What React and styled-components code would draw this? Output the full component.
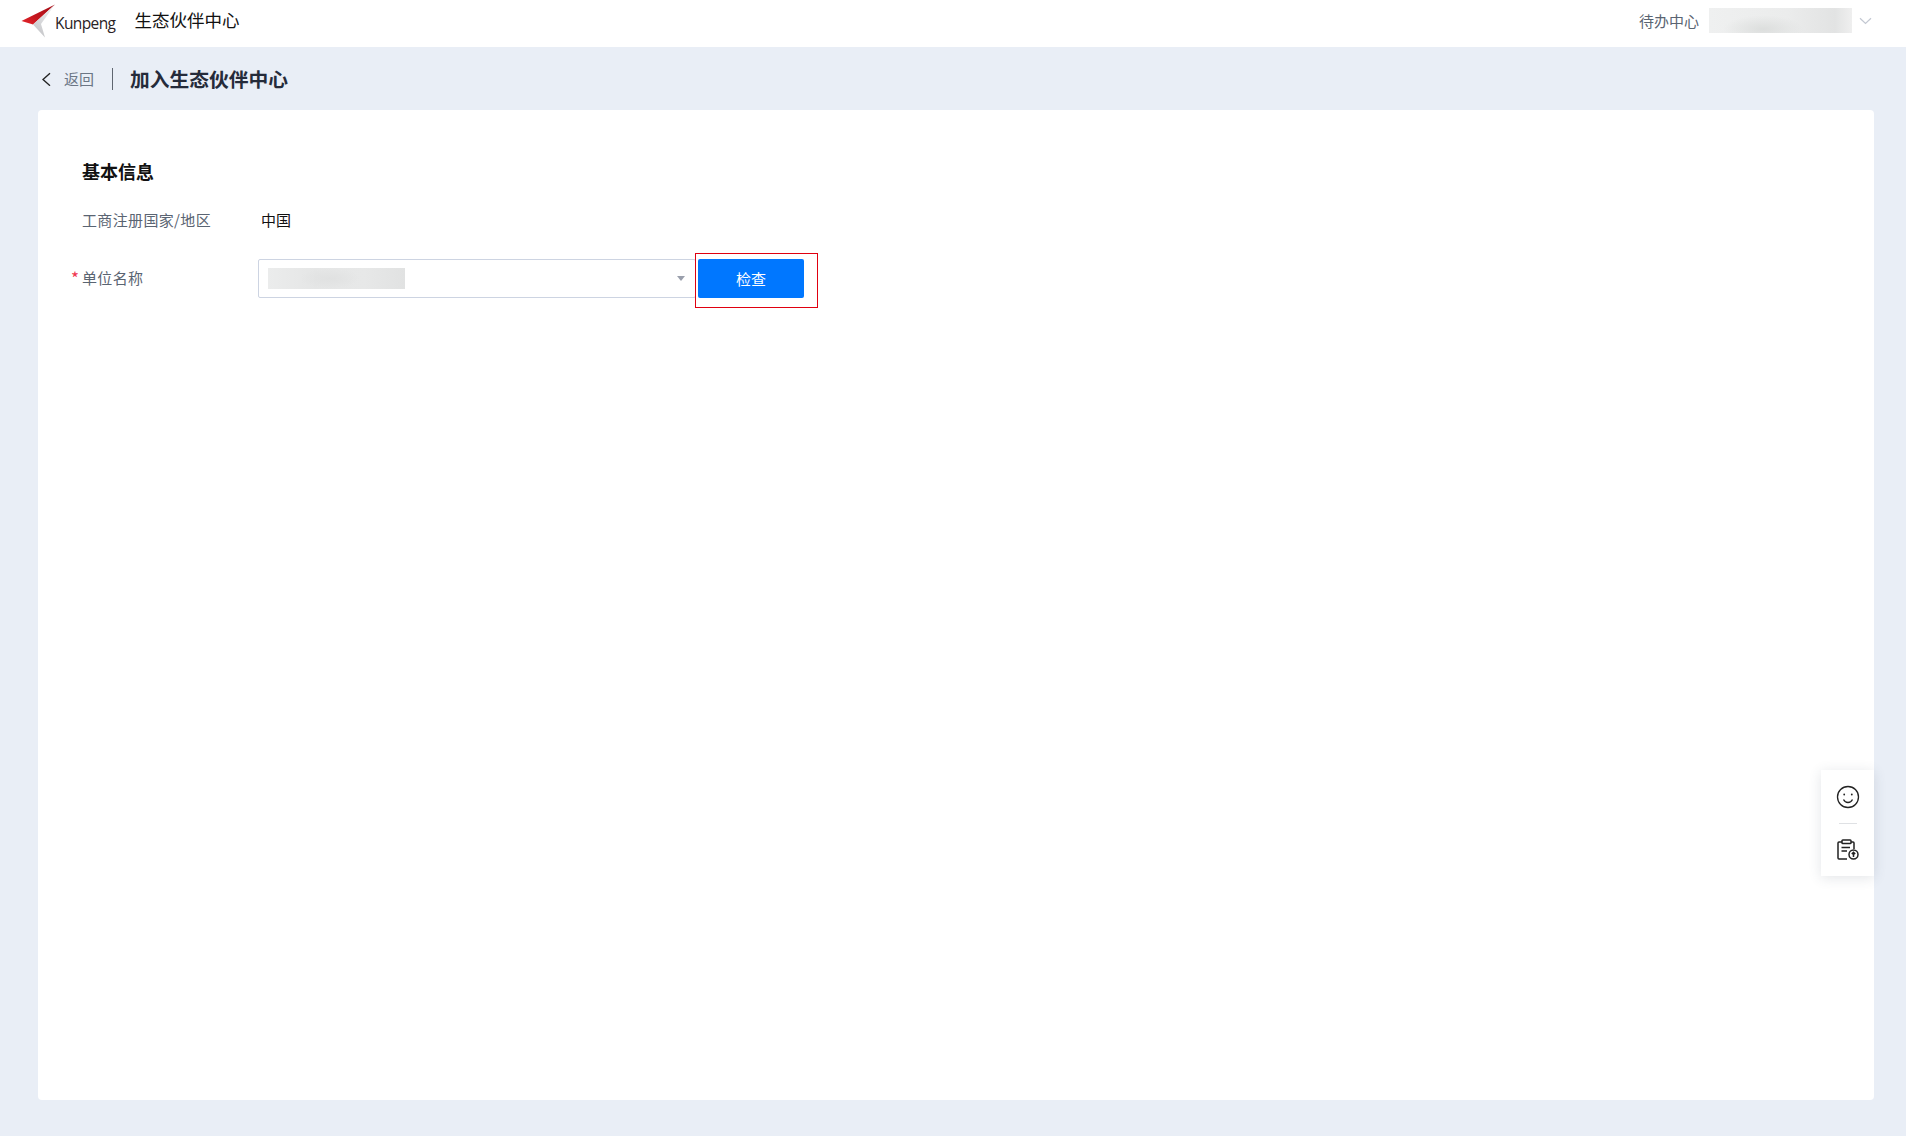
import React from "react";
import styled, { createGlobalStyle } from "styled-components";

const GlobalStyle = createGlobalStyle`
  html, body {
    margin: 0;
    padding: 0;
    background: #e9eef6;
    font-family: "Noto Sans CJK SC", "Noto Sans", sans-serif;
  }
`;

const Page = styled.div`
  width: 1906px;
  height: 1136px;
  position: relative;
  overflow: hidden;
  background: #e9eef6;
`;

const Header = styled.header`
  height: 47px;
  box-sizing: border-box;
  background: #fff;
  display: flex;
  align-items: center;
  justify-content: space-between;
  padding: 0 34px 6px 21px;
`;

const Brand = styled.div`
  display: flex;
  align-items: center;
`;

const BrandName = styled.span`
  font-family: "Open Sans", sans-serif;
  font-size: 15.5px;
  letter-spacing: -0.6px;
  color: #2a2224;
  margin: 4px 0 0 -1px;
`;

const SiteName = styled.span`
  font-size: 17.5px;
  color: #111;
  margin: -1px 0 0 19px;
  line-height: 1;
`;

const UserArea = styled.div`
  display: flex;
  align-items: center;
`;

const TodoLink = styled.span`
  font-size: 15px;
  color: #5a6472;
  margin: -1px 10px 0 0;
`;

const BlurBlock = styled.div`
  width: 143px;
  height: 25px;
  background: radial-gradient(ellipse 40px 14px at 38% 85%, #dcdedd, transparent),
    linear-gradient(90deg, #eff0f0 0%, #ebecec 55%, #e2e3e3 88%, #efefef 100%);
  margin-right: 7px;
`;

const Content = styled.main`
  padding: 0 32px 0 38px;
`;

const BackRow = styled.div`
  height: 63px;
  display: flex;
  align-items: center;
`;

const BackLink = styled.span`
  display: flex;
  align-items: center;
  font-size: 15px;
  color: #6b7685;
  gap: 12px;
  margin-left: 4px;
`;

const Divider = styled.span`
  width: 1px;
  height: 22px;
  background: #5f6670;
  margin: 0 17px 0 18px;
`;

const PageTitle = styled.h1`
  margin: 0;
  font-size: 19.75px;
  font-weight: 700;
  color: #252b3a;
  line-height: 1;
`;

const Card = styled.section`
  height: 990px;
  box-sizing: border-box;
  background: #fff;
  border-radius: 4px;
  padding: 48px 0 0 44px;
`;

const SectionTitle = styled.h2`
  margin: 0 0 25px;
  font-size: 18px;
  font-weight: 700;
  color: #111;
  line-height: 26px;
`;

const FormRow = styled.div`
  display: flex;
  align-items: center;
  margin-top: ${(p) => p.$top || 0}px;
`;

const Label = styled.label`
  width: 176px;
  flex: none;
  font-size: 15px;
  letter-spacing: 0.35px;
  color: #5a6472;
  position: relative;
  line-height: 22px;
  top: ${(p) => p.$shift || 0}px;
`;

const Star = styled.span`
  position: absolute;
  left: -11px;
  top: 0;
  color: #f0364f;
  font-size: 17px;
`;

const Value = styled.span`
  font-size: 15px;
  color: #111;
  margin-left: 3px;
  line-height: 22px;
`;

const Select = styled.div`
  width: 438px;
  height: 39px;
  box-sizing: border-box;
  border: 1px solid #cdd4e2;
  border-radius: 2px;
  display: flex;
  align-items: center;
  justify-content: space-between;
  padding: 0 10px 0 9px;
`;

const SelectBlur = styled.div`
  width: 137px;
  height: 21px;
  background: radial-gradient(ellipse 30px 10px at 45% 50%, #e0e1e1, transparent),
    linear-gradient(90deg, #ebecec 0%, #e5e6e6 35%, #e7e8e8 70%, #e1e2e2 100%);
`;

const Caret = styled.span`
  width: 0;
  height: 0;
  border-left: 4.5px solid transparent;
  border-right: 4.5px solid transparent;
  border-top: 5px solid #9a9fac;
`;

const Highlight = styled.div`
  width: 123px;
  height: 55px;
  box-sizing: border-box;
  border: 1px solid #e00010;
  padding: 5px 0 0 2px;
  margin: -6px 0 -10px -1px;
`;

const CheckButton = styled.button`
  display: block;
  width: 106px;
  height: 39px;
  border: none;
  border-radius: 2px;
  background: #0077ff;
  color: #fff;
  font-family: inherit;
  font-size: 15px;
  padding: 0;
`;

const FloatPanel = styled.aside`
  position: absolute;
  left: 1821px;
  top: 770px;
  width: 53px;
  height: 106px;
  background: #fff;
  box-shadow: 0 2px 12px rgba(60, 70, 90, 0.14);
  display: flex;
  flex-direction: column;
  align-items: center;
  padding-top: 15px;
  box-sizing: border-box;
`;

const PanelLine = styled.span`
  width: 18px;
  height: 1px;
  background: #dfe1e4;
  margin: 14px 0 15px;
`;

const PanelIcon = styled.svg`
  display: block;
  fill: none;
  stroke: #222;
  stroke-width: ${(p) => p.$weight || 1.3};
`;

const KunpengLogo = () => (
  <svg width="35" height="36" viewBox="0 0 35 36">
    <defs>
      <linearGradient id="wingRed" x1="1" y1="0" x2="0" y2="1">
        <stop offset="0" stopColor="#a30f18" />
        <stop offset="0.6" stopColor="#c4161e" />
        <stop offset="1" stopColor="#e6262c" />
      </linearGradient>
      <linearGradient id="wingGrey" x1="0.8" y1="0" x2="0.3" y2="1">
        <stop offset="0" stopColor="#f1f1f2" />
        <stop offset="1" stopColor="#c4c5c8" />
      </linearGradient>
    </defs>
    <polygon points="34,1.5 0.5,18 12,21.5" fill="url(#wingRed)" />
    <polygon points="34,1.5 12,21.5 24,34.5 20,21" fill="url(#wingGrey)" />
  </svg>
);

const BackIcon = () => (
  <svg width="10" height="14" viewBox="0 0 10 14" fill="none" stroke="#222" strokeWidth="1.4">
    <path d="M8 1.3 1 7.5 8 13.7" />
  </svg>
);

const UserCaret = () => (
  <svg width="13" height="8" viewBox="0 0 13 8" fill="none" stroke="#c3c8d2" strokeWidth="1.2">
    <path d="M1 1.2 6.5 6.5 12 1.2" />
  </svg>
);

const SmileIcon = () => (
  <PanelIcon width="24" height="24" viewBox="0 0 24 24">
    <circle cx="12" cy="12" r="10.5" />
    <circle cx="8.2" cy="9.5" r="0.9" fill="#222" stroke="none" />
    <circle cx="15.8" cy="9.5" r="0.9" fill="#222" stroke="none" />
    <path d="M7.5 14.5c1 2 2.6 3 4.5 3s3.5-1 4.5-3" />
  </PanelIcon>
);

const ClipboardIcon = () => (
  <PanelIcon width="22" height="21" viewBox="0 0 22 21" $weight={1.5}>
    <path d="M10 20H2a1 1 0 0 1-1-1V4a1 1 0 0 1 1-1h3M14 3h2a1 1 0 0 1 1 1v6" />
    <rect x="5" y="1" width="9" height="3.5" rx="0.8" />
    <path d="M4.5 8.5H13M4.5 12H10" />
    <circle cx="16.5" cy="15.5" r="4.5" />
    <path d="M16.5 18V13.4M14.8 15 16.5 13.3 18.2 15" />
  </PanelIcon>
);

export default function App() {
  return (
    <Page>
      <GlobalStyle />
      <Header>
        <Brand>
          <KunpengLogo />
          <BrandName>Kunpeng</BrandName>
          <SiteName>生态伙伴中心</SiteName>
        </Brand>
        <UserArea>
          <TodoLink>待办中心</TodoLink>
          <BlurBlock />
          <UserCaret />
        </UserArea>
      </Header>
      <Content>
        <BackRow>
          <BackLink>
            <BackIcon />
            返回
          </BackLink>
          <Divider />
          <PageTitle>加入生态伙伴中心</PageTitle>
        </BackRow>
        <Card>
          <SectionTitle>基本信息</SectionTitle>
          <FormRow>
            <Label>工商注册国家/地区</Label>
            <Value>中国</Value>
          </FormRow>
          <FormRow $top={28}>
            <Label $shift={-1}>
              <Star>*</Star>
              单位名称
            </Label>
            <Select>
              <SelectBlur />
              <Caret />
            </Select>
            <Highlight>
              <CheckButton>检查</CheckButton>
            </Highlight>
          </FormRow>
        </Card>
      </Content>
      <FloatPanel>
        <SmileIcon />
        <PanelLine />
        <ClipboardIcon />
      </FloatPanel>
    </Page>
  );
}
